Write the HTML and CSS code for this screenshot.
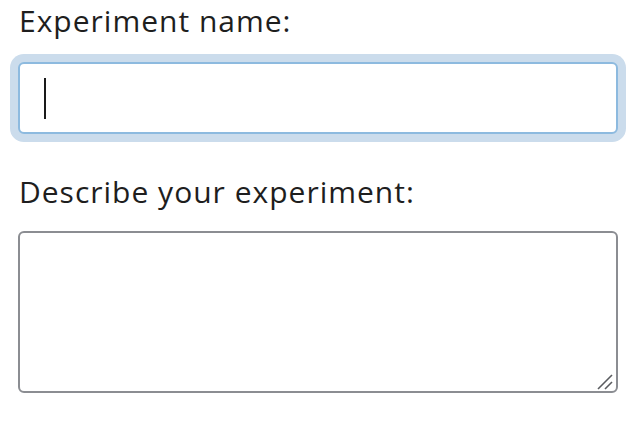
FILE: index.html
```html
<!DOCTYPE html>
<html>
<head>
<meta charset="utf-8">
<link rel="stylesheet" href="styles.css">
</head>
<body>
<form class="form">
  <label class="label">Experiment name:</label>
  <div class="input focused"><span class="caret"></span></div>
  <label class="label label-second">Describe your experiment:</label>
  <div class="textarea-wrap">
    <textarea class="textarea"></textarea>
    <svg class="grip" width="18" height="18" viewBox="0 0 18 18">
      <line x1="2" y1="16" x2="16" y2="2" stroke="#5a5c60" stroke-width="1.6"/>
      <line x1="9" y1="16" x2="16" y2="9" stroke="#5a5c60" stroke-width="1.6"/>
    </svg>
  </div>
</form>
</body>
</html>
```
FILE: styles.css
```css
html, body {
  margin: 0;
  padding: 0;
  background: #ffffff;
}
.form {
  display: flex;
  flex-direction: column;
  align-items: flex-start;
  padding: 2px 0 0 18px;
  font-family: "Open Sans", "Noto Sans", sans-serif;
  color: #1e1e1e;
}
.label {
  display: block;
  font-size: 30px;
  line-height: 38px;
  letter-spacing: 1px;
  margin-left: 1px;
}
.input {
  box-sizing: border-box;
  width: 600px;
  height: 72px;
  margin-top: 22px;
  border: 2px solid #8dbadf;
  border-radius: 6px;
  background: #fff;
  box-shadow: 0 0 0 8px #cbdcec;
  padding: 14px 0 0 24px;
}
.caret {
  display: block;
  width: 2px;
  height: 41px;
  background: #1a1a1a;
}
.label-second {
  margin-top: 39px;
}
.textarea-wrap {
  position: relative;
  margin-top: 20px;
  width: 600px;
  height: 162px;
}
.textarea {
  display: block;
  box-sizing: border-box;
  width: 600px;
  height: 162px;
  margin: 0;
  border: 2px solid #8b8d92;
  border-radius: 6px;
  background: #fff;
  resize: none;
  outline: none;
  font: inherit;
}
.grip {
  position: absolute;
  right: 4px;
  bottom: 2px;
}
```
